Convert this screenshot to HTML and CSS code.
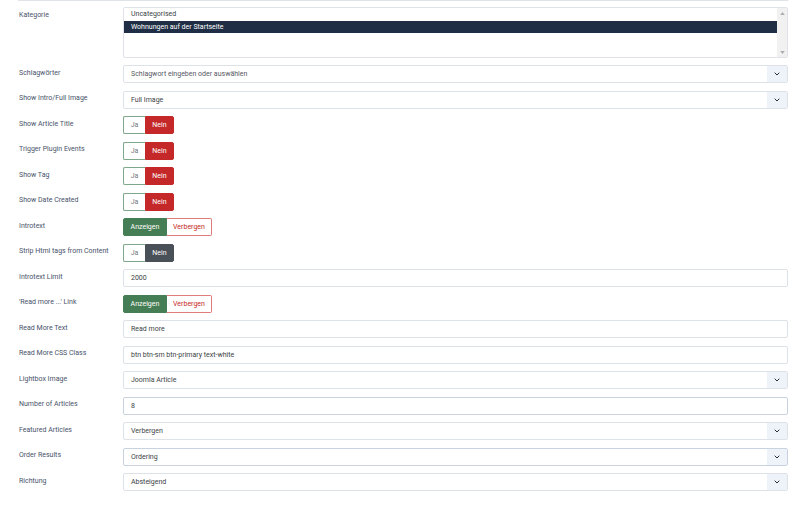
FILE: index.html
```html
<!DOCTYPE html>
<html lang="de">
<head>
<meta charset="utf-8">
<link rel="stylesheet" href="styles.css">
</head>
<body>
<div class="topline"></div>
<div class="form">
  <div class="row">
    <div class="label">Kategorie</div>
    <div class="multi">
      <div class="options">
        <div class="opt">Uncategorised</div>
        <div class="opt sel">Wohnungen auf der Startseite</div>
      </div>
      <div class="scroll">
        <svg width="5" height="3" viewBox="0 0 6 4"><path d="M0 4 L3 0 L6 4 Z" fill="#a8acb0"/></svg>
        <svg width="5" height="3" viewBox="0 0 6 4"><path d="M0 0 L3 4 L6 0 Z" fill="#a8acb0"/></svg>
      </div>
    </div>
  </div>
  <div class="row">
    <div class="label">Schlagwörter</div>
    <div class="field select"><span class="val muted">Schlagwort eingeben oder auswählen</span><span class="chev"><svg width="6" height="4" viewBox="0 0 6 4"><path d="M0.7 0.7 L3 3 L5.3 0.7" fill="none" stroke="#2a2e33" stroke-width="1"/></svg></span></div>
  </div>
  <div class="row">
    <div class="label">Show Intro/Full Image</div>
    <div class="field select"><span class="val">Full Image</span><span class="chev"><svg width="6" height="4" viewBox="0 0 6 4"><path d="M0.7 0.7 L3 3 L5.3 0.7" fill="none" stroke="#2a2e33" stroke-width="1"/></svg></span></div>
  </div>
  <div class="row">
    <div class="label">Show Article Title</div>
    <div class="toggle"><span class="btn ja">Ja</span><span class="btn nein">Nein</span></div>
  </div>
  <div class="row">
    <div class="label">Trigger Plugin Events</div>
    <div class="toggle"><span class="btn ja">Ja</span><span class="btn nein">Nein</span></div>
  </div>
  <div class="row">
    <div class="label">Show Tag</div>
    <div class="toggle"><span class="btn ja">Ja</span><span class="btn nein">Nein</span></div>
  </div>
  <div class="row">
    <div class="label">Show Date Created</div>
    <div class="toggle"><span class="btn ja">Ja</span><span class="btn nein">Nein</span></div>
  </div>
  <div class="row">
    <div class="label">Introtext</div>
    <div class="toggle"><span class="btn show">Anzeigen</span><span class="btn hide">Verbergen</span></div>
  </div>
  <div class="row">
    <div class="label">Strip Html tags from Content</div>
    <div class="toggle"><span class="btn ja">Ja</span><span class="btn nein dark">Nein</span></div>
  </div>
  <div class="row">
    <div class="label">Introtext Limit</div>
    <div class="field"><span class="val">2000</span></div>
  </div>
  <div class="row">
    <div class="label">'Read more ...' Link</div>
    <div class="toggle"><span class="btn show">Anzeigen</span><span class="btn hide">Verbergen</span></div>
  </div>
  <div class="row">
    <div class="label">Read More Text</div>
    <div class="field"><span class="val">Read more</span></div>
  </div>
  <div class="row">
    <div class="label">Read More CSS Class</div>
    <div class="field"><span class="val">btn btn-sm btn-primary text-white</span></div>
  </div>
  <div class="row">
    <div class="label">Lightbox Image</div>
    <div class="field select"><span class="val">Joomla Article</span><span class="chev"><svg width="6" height="4" viewBox="0 0 6 4"><path d="M0.7 0.7 L3 3 L5.3 0.7" fill="none" stroke="#2a2e33" stroke-width="1"/></svg></span></div>
  </div>
  <div class="row">
    <div class="label">Number of Articles</div>
    <div class="field blue"><span class="val">8</span></div>
  </div>
  <div class="row">
    <div class="label">Featured Articles</div>
    <div class="field select"><span class="val">Verbergen</span><span class="chev"><svg width="6" height="4" viewBox="0 0 6 4"><path d="M0.7 0.7 L3 3 L5.3 0.7" fill="none" stroke="#2a2e33" stroke-width="1"/></svg></span></div>
  </div>
  <div class="row">
    <div class="label">Order Results</div>
    <div class="field select blue"><span class="val">Ordering</span><span class="chev"><svg width="6" height="4" viewBox="0 0 6 4"><path d="M0.7 0.7 L3 3 L5.3 0.7" fill="none" stroke="#2a2e33" stroke-width="1"/></svg></span></div>
  </div>
  <div class="row">
    <div class="label">Richtung</div>
    <div class="field select"><span class="val">Absteigend</span><span class="chev"><svg width="6" height="4" viewBox="0 0 6 4"><path d="M0.7 0.7 L3 3 L5.3 0.7" fill="none" stroke="#2a2e33" stroke-width="1"/></svg></span></div>
  </div>
</div>
</body>
</html>
```
FILE: styles.css
```css
html, body {
  margin: 0;
  padding: 0;
  background: #ffffff;
}
body {
  font-family: Roboto, "Liberation Sans", Arial, sans-serif;
  font-size: 7px;
  color: #3a3f45;
  width: 800px;
  height: 511px;
  overflow: hidden;
}
.topline {
  margin: 0 12px 0 18px;
  height: 0;
  border-top: 1.5px solid #dfe3e8;
}
.form {
  padding: 6px 12px 0 19px;
  display: flex;
  flex-direction: column;
  gap: 7.5px;
}
.row {
  display: grid;
  grid-template-columns: 104px 665px;
  align-items: start;
}
.label {
  padding-top: 3.5px;
  line-height: 9px;
  color: #48536a;
  white-space: nowrap;
}
.multi {
  height: 50.5px;
  box-sizing: border-box;
  border: 1px solid #dfe3e8;
  border-radius: 2px;
  display: flex;
  overflow: hidden;
}
.options {
  flex: 1;
}
.opt {
  height: 12.5px;
  line-height: 13px;
  padding-left: 7px;
}
.opt.sel {
  background: #1f2d45;
  color: #ffffff;
}
.scroll {
  width: 10px;
  background: #f1f1f1;
  display: flex;
  flex-direction: column;
  justify-content: space-between;
  align-items: center;
  padding: 4px 0 3px;
}
.field {
  height: 18px;
  box-sizing: border-box;
  border: 1px solid #dde2e8;
  border-radius: 2px;
  display: flex;
  align-items: center;
  overflow: hidden;
}
.field.blue {
  border-color: #c8d2e0;
}
.val {
  flex: 1;
  padding-left: 7px;
  line-height: 16px;
  white-space: nowrap;
}
.val.muted {
  color: #55595f;
}
.chev {
  width: 20px;
  height: 100%;
  background: #eef2f9;
  display: flex;
  align-items: center;
  justify-content: center;
}
.toggle {
  display: flex;
  height: 18px;
}
.btn {
  box-sizing: border-box;
  height: 18px;
  display: flex;
  align-items: center;
  justify-content: center;
  border: 1px solid;
}
.btn.ja {
  width: 22px;
  border-color: #7fa78b;
  border-right: none;
  color: #73787e;
  border-radius: 2px 0 0 2px;
  background: #ffffff;
}
.btn.nein {
  width: 29px;
  background: #c52828;
  border-color: #c52828;
  color: #ffffff;
  border-radius: 0 2px 2px 0;
}
.btn.nein.dark {
  background: #4a5058;
  border-color: #4a5058;
}
.btn.show {
  width: 44px;
  background: #457d54;
  border-color: #457d54;
  color: #ffffff;
  border-radius: 2px 0 0 2px;
}
.btn.hide {
  width: 45px;
  background: #ffffff;
  border-color: #df7b7b;
  border-left: none;
  color: #c52828;
  border-radius: 0 2px 2px 0;
}
```
